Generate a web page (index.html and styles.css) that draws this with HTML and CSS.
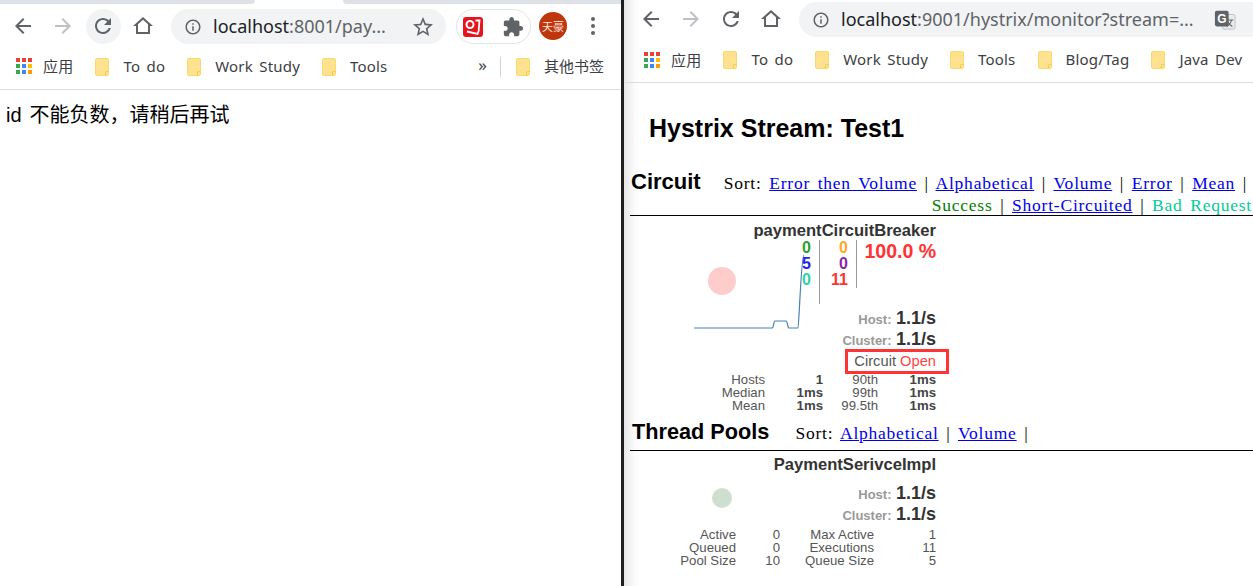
FILE: index.html
```html
<!DOCTYPE html>
<html lang="zh">
<head>
<meta charset="utf-8">
<title>Hystrix Stream: Test1</title>
<link rel="stylesheet" href="styles.css">
</head>
<body>
<svg class="sprites" width="0" height="0" aria-hidden="true">
  <symbol id="i-back" viewBox="0 0 24 24"><path d="M20 11H7.83l5.59-5.59L12 4l-8 8 8 8 1.41-1.41L7.83 13H20v-2z"/></symbol>
  <symbol id="i-forward" viewBox="0 0 24 24"><path d="M4 11h12.17l-5.59-5.59L12 4l8 8-8 8-1.41-1.41L16.17 13H4v-2z"/></symbol>
  <symbol id="i-reload" viewBox="0 0 24 24"><path d="M17.65 6.35C16.2 4.9 14.21 4 12 4c-4.42 0-7.99 3.58-7.99 8s3.57 8 7.99 8c3.73 0 6.84-2.55 7.73-6h-2.08c-.82 2.33-3.04 4-5.65 4-3.31 0-6-2.69-6-6s2.69-6 6-6c1.66 0 3.14.69 4.22 1.78L13 11h7V4l-2.35 2.35z"/></symbol>
  <symbol id="i-home" viewBox="0 0 24 24"><path d="M12 5.69l5 4.5V18H7v-7.81l5-4.5M12 3L2 12h3v8h14v-8h3L12 3z"/></symbol>
  <symbol id="i-info" viewBox="0 0 24 24"><path d="M11 7h2v2h-2zm0 4h2v6h-2zm1-9C6.48 2 2 6.48 2 12s4.48 10 10 10 10-4.48 10-10S17.52 2 12 2zm0 18c-4.41 0-8-3.59-8-8s3.59-8 8-8 8 3.59 8 8-3.59 8-8 8z"/></symbol>
  <symbol id="i-star" viewBox="0 0 24 24"><path d="M22 9.24l-7.19-.62L12 2 9.19 8.63 2 9.24l5.46 4.73L5.82 21 12 17.27 18.18 21l-1.63-7.03L22 9.24zM12 15.4l-3.76 2.27 1-4.28-3.32-2.88 4.38-.38L12 6.1l1.71 4.04 4.38.38-3.32 2.88 1 4.28L12 15.4z"/></symbol>
  <symbol id="i-puzzle" viewBox="0 0 24 24"><path d="M20.5 11H19V7c0-1.1-.9-2-2-2h-4V3.5C13 2.12 11.88 1 10.5 1S8 2.12 8 3.5V5H4c-1.1 0-1.99.9-1.99 2v3.8H3.5c1.49 0 2.7 1.21 2.7 2.7s-1.21 2.7-2.7 2.7H2V20c0 1.1.9 2 2 2h3.8v-1.5c0-1.49 1.21-2.7 2.7-2.7 1.49 0 2.7 1.21 2.7 2.7V22H17c1.1 0 2-.9 2-2v-4h1.5c1.38 0 2.5-1.12 2.5-2.5S21.88 11 20.5 11z"/></symbol>
  <symbol id="i-kebab" viewBox="0 0 24 24"><circle cx="12" cy="5" r="2"/><circle cx="12" cy="12" r="2"/><circle cx="12" cy="19" r="2"/></symbol>
  <symbol id="i-folder" viewBox="0 0 14 18"><path d="M2 .5h10A1.500 1.500 0 0 1 13.500 2v14a1.500 1.500 0 0 1-1.500 1.500H2A1.500 1.500 0 0 1 .5 16V2A1.500 1.500 0 0 1 2 .5z" fill="#fee28f" stroke="#fbd96d"/><path d="M10.500 17.500v-3a1 1 0 0 1 1-1h2" fill="none" stroke="#f5c842"/></symbol>
  <symbol id="i-apps" viewBox="0 0 17 17">
    <rect x="0" y="0" width="4" height="4" fill="#ea4335"/><rect x="6" y="0" width="4" height="4" fill="#ea4335"/><rect x="12" y="0" width="4" height="4" fill="#ea4335"/>
    <rect x="0" y="6" width="4" height="4" fill="#34a853"/><rect x="6" y="6" width="4" height="4" fill="#4285f4"/><rect x="12" y="6" width="4" height="4" fill="#fbbc05"/>
    <rect x="0" y="12" width="4" height="4" fill="#34a853"/><rect x="6" y="12" width="4" height="4" fill="#4285f4"/><rect x="12" y="12" width="4" height="4" fill="#fb9c05"/>
  </symbol>
</svg>

<section class="window window-left">
  <div class="tabstrip"><span class="tab-rest tab-rest-a"></span><span class="tab-gap"></span><span class="tab-rest tab-rest-b"></span></div>
  <header class="toolbar">
    <span class="btn"><svg class="ico ico-dark"><use href="#i-back"/></svg></span>
    <span class="btn"><svg class="ico ico-off"><use href="#i-forward"/></svg></span>
    <span class="btn"><span class="btn-hover"><svg class="ico ico-dark"><use href="#i-reload"/></svg></span></span>
    <span class="btn"><svg class="ico ico-dark"><use href="#i-home"/></svg></span>
    <div class="omnibox omnibox-left">
      <svg class="ico-info ico-dark"><use href="#i-info"/></svg>
      <span class="url"><span class="url-host">localhost</span>:8001/pay...</span>
      <svg class="ico ico-star ico-dark"><use href="#i-star"/></svg>
    </div>
    <div class="ext-pill">
      <svg class="logo" viewBox="0 0 20 20">
        <rect width="20" height="20" rx="3" fill="#e8141c"/>
        <circle cx="7" cy="7.500" r="3.500" fill="none" stroke="#fff" stroke-width="2"/>
        <path d="M12.500 3.500h4l-.8 9.500M4 14.500l10.500 2.500 1.500-4" fill="none" stroke="#fff" stroke-width="1.800"/>
      </svg>
      <svg class="ico-puzzle ico-dark"><use href="#i-puzzle"/></svg>
    </div>
    <span class="avatar">天豪</span>
    <svg class="ico ico-kebab ico-dark"><use href="#i-kebab"/></svg>
  </header>
  <nav class="bookmarks bookmarks-left">
    <span class="bm bm-apps"><svg class="apps"><use href="#i-apps"/></svg><span>应用</span></span>
    <span class="bm"><svg class="folder"><use href="#i-folder"/></svg><span>To do</span></span>
    <span class="bm"><svg class="folder"><use href="#i-folder"/></svg><span>Work Study</span></span>
    <span class="bm"><svg class="folder"><use href="#i-folder"/></svg><span>Tools</span></span>
    <span class="bm-more">»</span>
    <span class="bm-sep"></span>
    <span class="bm bm-other"><svg class="folder"><use href="#i-folder"/></svg><span>其他书签</span></span>
  </nav>
  <main class="plain-page">id 不能负数，请稍后再试</main>
</section>

<div class="window-divider"></div>

<section class="window window-right">
  <header class="toolbar toolbar-right">
    <span class="btn"><svg class="ico ico-dark"><use href="#i-back"/></svg></span>
    <span class="btn"><svg class="ico ico-off"><use href="#i-forward"/></svg></span>
    <span class="btn"><svg class="ico ico-dark"><use href="#i-reload"/></svg></span>
    <span class="btn"><svg class="ico ico-dark"><use href="#i-home"/></svg></span>
    <div class="omnibox omnibox-right">
      <svg class="ico-info ico-dark"><use href="#i-info"/></svg>
      <span class="url"><span class="url-host">localhost</span>:9001/hystrix/monitor?stream=...</span>
      <svg class="translate" viewBox="0 0 24 24">
        <rect x="9" y="6" width="14" height="16" rx="2" fill="#e8eaed" stroke="#bdc1c6"/>
        <rect x="1" y="2" width="15" height="17" rx="2" fill="#5f6368"/>
        <text x="8.500" y="15" class="translate-g">G</text>
        <path d="M14 12h7M19 12c-.5 3-2.500 5.500-5 7M15 14c1 2 3 4 5 5" fill="none" stroke="#5f6368" stroke-width="1.200"/>
      </svg>
    </div>
  </header>
  <nav class="bookmarks bookmarks-right">
    <span class="bm bm-apps"><svg class="apps"><use href="#i-apps"/></svg><span>应用</span></span>
    <span class="bm"><svg class="folder"><use href="#i-folder"/></svg><span>To do</span></span>
    <span class="bm"><svg class="folder"><use href="#i-folder"/></svg><span>Work Study</span></span>
    <span class="bm"><svg class="folder"><use href="#i-folder"/></svg><span>Tools</span></span>
    <span class="bm"><svg class="folder"><use href="#i-folder"/></svg><span>Blog/Tag</span></span>
    <span class="bm"><svg class="folder"><use href="#i-folder"/></svg><span>Java Dev</span></span>
  </nav>

  <main class="dashboard">
    <h2 class="stream-title">Hystrix Stream: Test1</h2>

    <div class="section-head section-head-circuit">
      <h3 class="section-name">Circuit</h3>
      <div class="sort sort-circuit">
        <div class="sort-line sort-line-first">Sort: <a href="#">Error then Volume</a> | <a href="#">Alphabetical</a> | <a href="#">Volume</a> | <a href="#">Error</a> | <a href="#">Mean</a> |</div>
        <div class="sort-line"><span class="c-success">Success</span> | <a href="#">Short-Circuited</a> | <span class="c-bad">Bad Request</span></div>
      </div>
    </div>

    <article class="card card-circuit">
      <svg class="spark" viewBox="0 0 112 80"><path d="M0 74H78.500C79.500 74 79.500 67 81 67H92C93.500 67 93.500 74 95 74H104C105 74 107 2 110 1" fill="none" stroke="#4682b4" stroke-width="1.200"/></svg>
      <span class="bubble bubble-red"></span>
      <div class="card-title">paymentCircuitBreaker</div>
      <div class="rates">
        <div class="rate-col rate-col-a"><span class="c-green">0</span><span class="c-blue">5</span><span class="c-teal">0</span></div>
        <div class="rate-col rate-col-b"><span class="c-orange">0</span><span class="c-purple">0</span><span class="c-red">11</span></div>
        <div class="rate-pct">100.0 %</div>
      </div>
      <div class="stat stat-host"><span class="stat-label">Host:</span> <span class="stat-value">1.1/s</span></div>
      <div class="stat"><span class="stat-label">Cluster:</span> <span class="stat-value">1.1/s</span></div>
      <div class="circuit-state">Circuit <span class="c-open">Open</span><span class="state-box"></span></div>
      <div class="metrics metrics-circuit">
        <span>Hosts</span><b>1</b><span>90th</span><b>1ms</b>
        <span>Median</span><b>1ms</b><span>99th</span><b>1ms</b>
        <span>Mean</span><b>1ms</b><span>99.5th</span><b>1ms</b>
      </div>
    </article>

    <div class="section-head section-head-pools">
      <h3 class="section-name">Thread Pools</h3>
      <div class="sort sort-pools">Sort: <a href="#">Alphabetical</a> | <a href="#">Volume</a> |</div>
    </div>

    <article class="card card-pool">
      <span class="bubble bubble-green"></span>
      <div class="card-title">PaymentSerivceImpl</div>
      <div class="stat stat-first"><span class="stat-label">Host:</span> <span class="stat-value">1.1/s</span></div>
      <div class="stat"><span class="stat-label">Cluster:</span> <span class="stat-value">1.1/s</span></div>
      <div class="metrics metrics-pool">
        <span>Active</span><span>0</span><span>Max Active</span><span>1</span>
        <span>Queued</span><span>0</span><span>Executions</span><span>11</span>
        <span>Pool Size</span><span>10</span><span>Queue Size</span><span>5</span>
      </div>
    </article>
  </main>
</section>
</body>
</html>
```

FILE: styles.css
```css
* { box-sizing: border-box; }
html, body { height: 100%; }
body {
  margin: 0;
  display: flex;
  overflow: hidden;
  background: #fff;
  font-family: "Liberation Sans", "Noto Sans CJK SC", sans-serif;
}
.sprites { display: block; width: 0; height: 0; }

.window { height: 586px; overflow: hidden; flex: none; }
.window-left { width: 621px; background: #fff; }
.window-divider { width: 3px; flex: none; background: #1d1f20; }
.window-right {
  width: 629px;
  background: linear-gradient(90deg, #e6e6e6 0, #fafafa 10px, #fff 16px);
}

.tabstrip { display: flex; height: 4px; }
.tab-rest { background: #dee1e6; display: block; }
.tab-rest-a { width: 255px; border-bottom-right-radius: 4px; }
.tab-gap { width: 88px; }
.tab-rest-b { flex: 1; border-bottom-left-radius: 4px; }

.toolbar {
  display: flex;
  align-items: center;
  height: 44px;
  padding-left: 3px;
}
.toolbar-right { height: 38px; padding-left: 7px; }

.btn {
  width: 40px;
  height: 36px;
  flex: none;
  display: flex;
  align-items: center;
  justify-content: center;
}
.btn-hover {
  width: 35px;
  height: 35px;
  border-radius: 50%;
  background: #f1f3f4;
  display: flex;
  align-items: center;
  justify-content: center;
}
.ico { width: 24px; height: 24px; display: block; flex: none; }
.ico-dark { fill: #5f6368; }
.ico-off { fill: #bdc1c6; }

.omnibox {
  height: 35px;
  border-radius: 18px 0 0 18px;
  background: #f1f3f4;
  display: flex;
  align-items: center;
  flex: none;
  padding-left: 13px;
  margin-top: 1px;
}
.omnibox-left {
  width: 275px;
  margin-left: 8px;
  border-radius: 18px;
}
.omnibox-right {
  width: 454px;
  margin-left: 8px;
}
.ico-info { width: 18px; height: 18px; flex: none; }
.url {
  margin-left: 11px;
  margin-top: -2px;
  font: 18px "Noto Sans", "Liberation Sans", sans-serif;
  color: #5f6368;
  white-space: nowrap;
}
.url-host { color: #202124; }
.ico-star { margin-left: auto; margin-right: 11px; }
.translate { width: 22px; height: 22px; margin-left: auto; margin-right: 17px; flex: none; }
.translate-g { font: bold 13px "Liberation Sans", sans-serif; fill: #fff; text-anchor: middle; }

.ext-pill {
  width: 75px;
  height: 35px;
  margin-left: 10px;
  margin-top: 1px;
  flex: none;
  border: 1px solid #e3e4e6;
  border-radius: 18px;
  display: flex;
  align-items: center;
  padding-left: 6px;
}
.logo { width: 20px; height: 20px; flex: none; }
.ico-puzzle { width: 22px; height: 22px; flex: none; margin-left: 19px; }
.avatar {
  width: 28px;
  height: 28px;
  flex: none;
  margin-left: 8px;
  border-radius: 50%;
  background: #bf360c;
  color: #fde8e0;
  font-size: 11px;
  line-height: 28px;
  text-align: center;
  font-family: "Noto Sans CJK SC", sans-serif;
}
.ico-kebab { margin-left: 14px; }

.bookmarks {
  border-bottom: 1px solid #dadce0;
  display: flex;
  align-items: center;
  gap: 22px;
  padding-left: 16px;
  font: 15px "Noto Sans", "Noto Sans CJK SC", sans-serif;
  letter-spacing: 0.2px;
  word-spacing: 2.2px;
  color: #3c4043;
}
.bookmarks-left { height: 42px; padding-bottom: 4px; padding-right: 17px; }
.bookmarks-right { height: 45px; padding-left: 20px; }
.bm { display: flex; align-items: center; gap: 14px; white-space: nowrap; flex: none; }
.bm span { margin-top: -2px; }
.bm-apps { gap: 10px; }
.bm-other { letter-spacing: 0; }
.apps { width: 17px; height: 17px; flex: none; }
.folder { width: 14px; height: 18px; flex: none; }
.bm-more { margin-left: auto; font-size: 17px; line-height: 1; margin-top: -4px; }
.bm-sep { width: 1px; height: 20px; background: #d0d2d5; margin-left: -9px; margin-right: -7px; }

.plain-page {
  padding: 14px 6px;
  font-size: 20px;
  line-height: 23px;
  word-spacing: 2.5px;
  color: #000;
}

.dashboard { padding-left: 6px; color: #000; }
.stream-title {
  margin: 31px 0 0 19px;
  font-size: 25px;
  line-height: 28px;
  font-weight: bold;
  white-space: nowrap;
}
.section-head {
  display: flex;
  border-bottom: 1px solid #000;
}
.section-head-circuit { height: 44px; margin-top: 30px; }
.section-head-pools { height: 29px; margin-top: 10px; }
.section-name {
  margin: 1px 0 0 1px;
  font-size: 22px;
  line-height: 18px;
  font-weight: bold;
  flex: none;
  white-space: nowrap;
}
.section-head-pools .section-name { font-size: 21.7px; line-height: 20px; margin-left: 2px; margin-top: 0; }
.sort {
  font: 17.5px/22px "Liberation Serif", serif;
  letter-spacing: 0.77px;
  word-spacing: 2.5px;
  white-space: nowrap;
}
.sort a { color: #0000ee; }
.sort-circuit {
  flex: 1;
  display: flex;
  flex-direction: column;
  align-items: flex-end;
  padding-right: 1px;
}
.sort-line-first { padding-right: 5px; }
.sort-pools { margin-left: 26px; padding-top: 1px; line-height: 20px; }
.c-success { color: #008000; }
.c-bad { color: #00cc99; }

.card {
  position: relative;
  width: 306px;
  text-align: right;
  color: #333;
}
.card-circuit { padding-top: 6px; }
.card-pool { padding-top: 5px; }
.card-title {
  font-size: 16.6px;
  line-height: 18px;
  font-weight: bold;
  color: #333;
  white-space: nowrap;
}
.card-circuit .card-title { margin-bottom: -1px; }
.spark {
  position: absolute;
  left: 64px;
  top: 38px;
  width: 112px;
  height: 80px;
}
.bubble {
  position: absolute;
  border-radius: 50%;
}
.bubble-red { left: 78px; top: 51px; width: 28px; height: 28px; background: #ffcccc; }
.bubble-green { left: 82px; top: 37px; width: 20px; height: 20px; background: #cfdfcf; }

.rates {
  display: flex;
  justify-content: flex-end;
  height: 66px;
  padding-top: 1px;
  position: relative;
}
.rate-col {
  display: flex;
  flex-direction: column;
  font-size: 16px;
  line-height: 16px;
  font-weight: bold;
  border-right: 1px solid #999;
  padding-right: 8px;
}
.rate-col-a { height: 64px; }
.rate-col-b { height: 48px; width: 37px; }
.rate-pct {
  width: 79px;
  font-size: 19.5px;
  line-height: 22px;
  font-weight: bold;
  color: #ff3333;
  white-space: nowrap;
}
.c-green { color: #2ca02c; }
.c-blue { color: #2222ee; }
.c-teal { color: #2dd4a8; }
.c-orange { color: #ffa726; }
.c-purple { color: #8e24aa; }
.c-red { color: #ff3333; }

.stat { line-height: 21px; height: 21px; white-space: nowrap; }
.stat-first { margin-top: 9px; }
.stat-host { margin-top: 3px; }
.stat-label { font-size: 13px; font-weight: bold; color: #999; }
.stat-value { font-size: 18px; font-weight: bold; color: #333; }

.circuit-state {
  position: relative;
  height: 23px;
  font-size: 14.7px;
  line-height: 23px;
  color: #555;
}
.c-open { color: #ff4444; }
.state-box {
  position: absolute;
  right: -13px;
  top: -1px;
  width: 104px;
  height: 25px;
  border: 3px solid #ff3333;
}

.metrics {
  display: grid;
  font-size: 13.2px;
  line-height: 13px;
  color: #555;
  white-space: nowrap;
}
.metrics-circuit { grid-template-columns: 135px 58px 55px 58px; }
.metrics-pool { grid-template-columns: 106px 44px 94px 62px; margin-top: 3px; }
.metrics b { color: #444; }
```
